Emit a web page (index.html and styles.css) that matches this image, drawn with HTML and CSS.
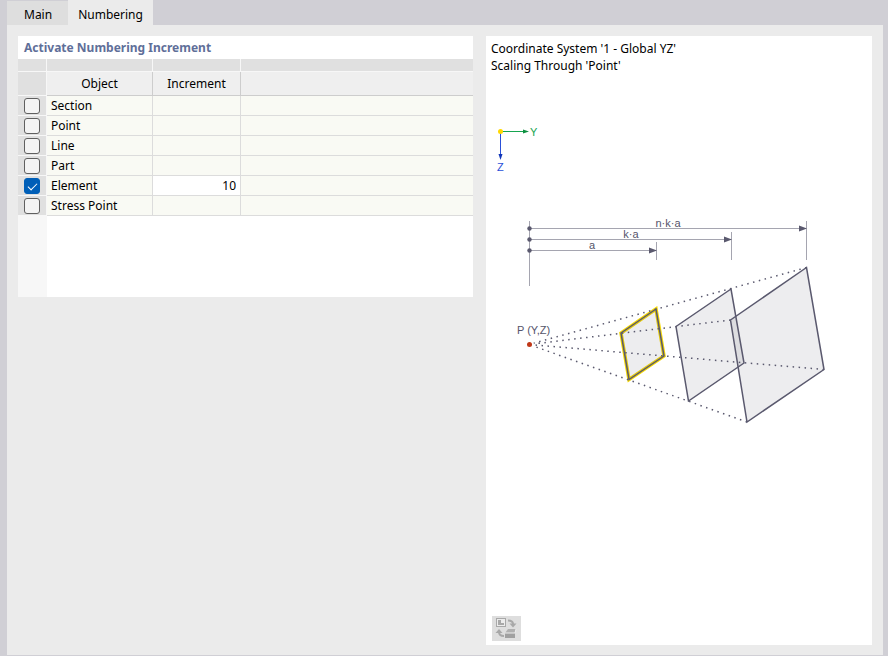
FILE: index.html
```html
<!DOCTYPE html>
<html lang="en">
<head>
    <meta charset="UTF-8">
    <meta name="viewport" content="width=device-width, initial-scale=1.0">
    <title>Numbering</title>
    <link rel="stylesheet" href="styles.css">
</head>
<body>

<div class="tabs" role="tablist">
    <button class="tab" role="tab" aria-selected="false">Main</button>
    <button class="tab active" role="tab" aria-selected="true">Numbering</button>
</div>

<main class="panel">
    <section class="numbering">
        <h2>Activate Numbering Increment</h2>
        <div class="grid">
            <table>
                <colgroup>
                    <col class="col-check">
                    <col class="col-object">
                    <col class="col-increment">
                    <col>
                </colgroup>
                <thead>
                    <tr class="strip"><td></td><td></td><td></td><td></td></tr>
                    <tr class="head"><td></td><th>Object</th><th>Increment</th><td></td></tr>
                </thead>
                <tbody>
                    <tr><td><input type="checkbox" id="section"></td><td><label for="section">Section</label></td><td></td><td></td></tr>
                    <tr><td><input type="checkbox" id="point"></td><td><label for="point">Point</label></td><td></td><td></td></tr>
                    <tr><td><input type="checkbox" id="line"></td><td><label for="line">Line</label></td><td></td><td></td></tr>
                    <tr><td><input type="checkbox" id="part"></td><td><label for="part">Part</label></td><td></td><td></td></tr>
                    <tr><td><input type="checkbox" id="element" checked></td><td><label for="element">Element</label></td><td class="edit"><input type="text" value="10" aria-label="Element increment"></td><td></td></tr>
                    <tr><td><input type="checkbox" id="stress"></td><td><label for="stress">Stress Point</label></td><td></td><td></td></tr>
                </tbody>
            </table>
        </div>
    </section>

    <section class="preview">
        <p>Coordinate System '1 - Global YZ'<br>Scaling Through 'Point'</p>

        <svg class="diagram" viewBox="0 0 386 360">
            <!-- axes -->
            <path d="M15 55.5H40" stroke="#17a550"/>
            <path d="M37 53.5l6 2-6 2z" fill="#0d8f40"/>
            <path d="M14.5 56V80" stroke="#2a50d8"/>
            <path d="M12.5 78l2 6 2-6z" fill="#1035b8"/>
            <circle cx="14.5" cy="55.5" r="2.5" fill="#ffd800"/>
            <text class="y-axis" x="44" y="60">Y</text>
            <text class="z-axis" x="11" y="95">Z</text>

            <!-- dimensions -->
            <path class="dims" d="M43.5 145V210M43 152.5H315M43 163.5H240M43 174.5H165M170.5 166V184M245.5 156V184M320.5 145V184"/>
            <g class="solid">
                <path d="M313 149.5l8 3-8 3zM238 160.5l8 3-8 3zM163 171.5l8 3-8 3z"/>
                <circle cx="43.5" cy="152.5" r="2.2"/>
                <circle cx="43.5" cy="163.5" r="2.2"/>
                <circle cx="43.5" cy="174.5" r="2.2"/>
            </g>
            <text x="182" y="151" text-anchor="middle">n·k·a</text>
            <text x="145" y="162" text-anchor="middle">k·a</text>
            <text x="106" y="173" text-anchor="middle">a</text>

            <!-- scaled shapes -->
            <path class="shape" d="M320.5 191.5L244.5 244L261 346L338 293.5z"/>
            <path class="shape" d="M245 213L190 250.5L202.5 325L258 287z"/>
            <path class="halo" d="M170 233L135 257L143 303.5L178 280z"/>
            <path class="shape" d="M170 233L135 257L143 303.5L178 280z"/>
            <path class="rays" d="M320.5 191.5L43 268.5M244.5 244L43 268.5M338 293.5L43 268.5M261 346L43 268.5"/>
            <circle cx="43.5" cy="268.5" r="4.5" fill="#fff"/>
            <circle cx="43.5" cy="268.5" r="2.5" fill="#c03818"/>
            <text x="31" y="258">P (Y,Z)</text>
        </svg>

        <button class="swap" aria-label="Switch picture">
            <svg width="29" height="25" viewBox="0 0 29 25">
                <rect x="4.5" y="2.5" width="9" height="8" fill="#ececec" stroke="#a8a8a8"/>
                <path d="M6 4h3v3h3v2H6z" fill="#a8a8a8"/>
                <path d="M16 4.5q5 0 5 3.500" fill="none" stroke="#a8a8a8" stroke-width="2"/>
                <path d="M17.500 7.500h7l-3.500 4z" fill="#a8a8a8"/>
                <path d="M7 16q0 4 5 4" fill="none" stroke="#a8a8a8" stroke-width="2"/>
                <path d="M3.500 17L7 13l3.500 4z" fill="#a8a8a8"/>
                <path d="M13 17h10v5H13z" fill="#a0a0a0"/>
                <path d="M13 17l3-4h8l-1 4z" fill="#b0b0b0"/>
                <path d="M13 17h10l1-4" fill="none" stroke="#eee"/>
            </svg>
        </button>
    </section>
</main>

</body>
</html>
```
FILE: styles.css
```css
* {
    box-sizing: border-box;
}

body {
    display: flex;
    flex-direction: column;
    min-height: 100vh;
    margin: 0;
    padding: 0 5px 1px 7px;
    background-color: #d0cfd5;
    color: #000;
    font-family: "Noto Sans", sans-serif;
    font-size: 12px;
    line-height: 17px;
}

button,
input {
    font: inherit;
    color: inherit;
}

.tabs {
    display: flex;
    height: 25px;
}

.tab {
    margin-top: 1px;
    padding: 2px 16px 0 17px;
    border: none;
    background-color: #dedede;
}

.tab.active {
    margin-top: 0;
    padding: 3px 10px 0;
    background-color: #ebebeb;
}

.panel {
    flex: 1;
    display: grid;
    grid-template-columns: 455fr 386fr;
    gap: 13px;
    padding: 11px 11px 10px;
    background-color: #ebebeb;
}

.numbering {
    align-self: start;
    background-color: #fff;
}

h2 {
    margin: 0;
    padding: 0 6px;
    color: #5f6f99;
    font-size: 12px;
    line-height: 23px;
}

/* the row header column runs on below the last row */
.grid {
    padding-bottom: 81px;
    background: linear-gradient(#f7f7f7, #f7f7f7) left / 29px 100% no-repeat;
}

table {
    width: 100%;
    table-layout: fixed;
    border-collapse: separate;
    border-spacing: 0;
}

.col-check {
    width: 29px;
}

.col-object {
    width: 106px;
}

.col-increment {
    width: 88px;
}

td,
th {
    height: 20px;
    padding: 0;
    border-right: 1px solid #dcdcdc;
    border-bottom: 1px solid #dcdcdc;
    background-color: #f9faf4;
    line-height: 19px;
}

td:last-child {
    border-right: none;
}

.strip td {
    height: 13px;
    border-color: #f7f7f7;
    background-color: #e0e0e0;
}

.head td,
.head th {
    height: 24px;
    border-color: #cdcdcd;
    background-color: #efefef;
    font-weight: normal;
}

tbody td:first-child,
.head td:first-child {
    border-color: #f7f7f7;
    background-color: #e0e0e0;
}

tbody td:first-child {
    vertical-align: top;
}

td label {
    display: block;
    padding-left: 4px;
}

td.edit {
    background-color: #fff;
}

td.edit input {
    display: block;
    width: 100%;
    height: 19px;
    padding: 0 4px;
    border: none;
    background: none;
    text-align: right;
}

input[type="checkbox"] {
    appearance: none;
    display: block;
    width: 16px;
    height: 16px;
    margin: 2px 0 0 6px;
    border: 1px solid #606060;
    border-radius: 3px;
    background-color: #f4f4f4;
}

input[type="checkbox"]:checked {
    border-color: #005fb8;
    background-color: #005fb8;
}

input[type="checkbox"]:checked::after {
    content: "";
    display: block;
    width: 8px;
    height: 4px;
    margin: 4px 0 0 3px;
    border: solid #fff;
    border-width: 0 0 1px 1px;
    transform: rotate(-45deg);
}

.preview {
    display: flex;
    flex-direction: column;
    background-color: #fff;
}

.preview p {
    margin: 0;
    padding: 4px 5px 2px;
}

.diagram {
    width: 100%;
    font-family: "Liberation Sans", Arial, sans-serif;
    font-size: 11px;
}

.diagram text {
    fill: #55546a;
}

.diagram .y-axis {
    fill: #17a550;
}

.diagram .z-axis {
    fill: #2a50d8;
}

.dims {
    fill: none;
    stroke: #a5a5b0;
}

.solid {
    fill: #5a596e;
}

.shape {
    fill: rgba(90, 89, 110, 0.11);
    stroke: #5a596e;
    stroke-width: 1.5;
}

.halo {
    fill: none;
    stroke: #f5d800;
    stroke-width: 3.5;
}

.rays {
    fill: none;
    stroke: #5a596e;
    stroke-width: 1.5;
    stroke-dasharray: 1.5 4.5;
}

.swap {
    align-self: flex-start;
    width: 29px;
    height: 25px;
    margin: auto 0 4px 6px;
    padding: 0;
    border: none;
    background-color: #dedede;
}

.swap svg {
    display: block;
}
```
